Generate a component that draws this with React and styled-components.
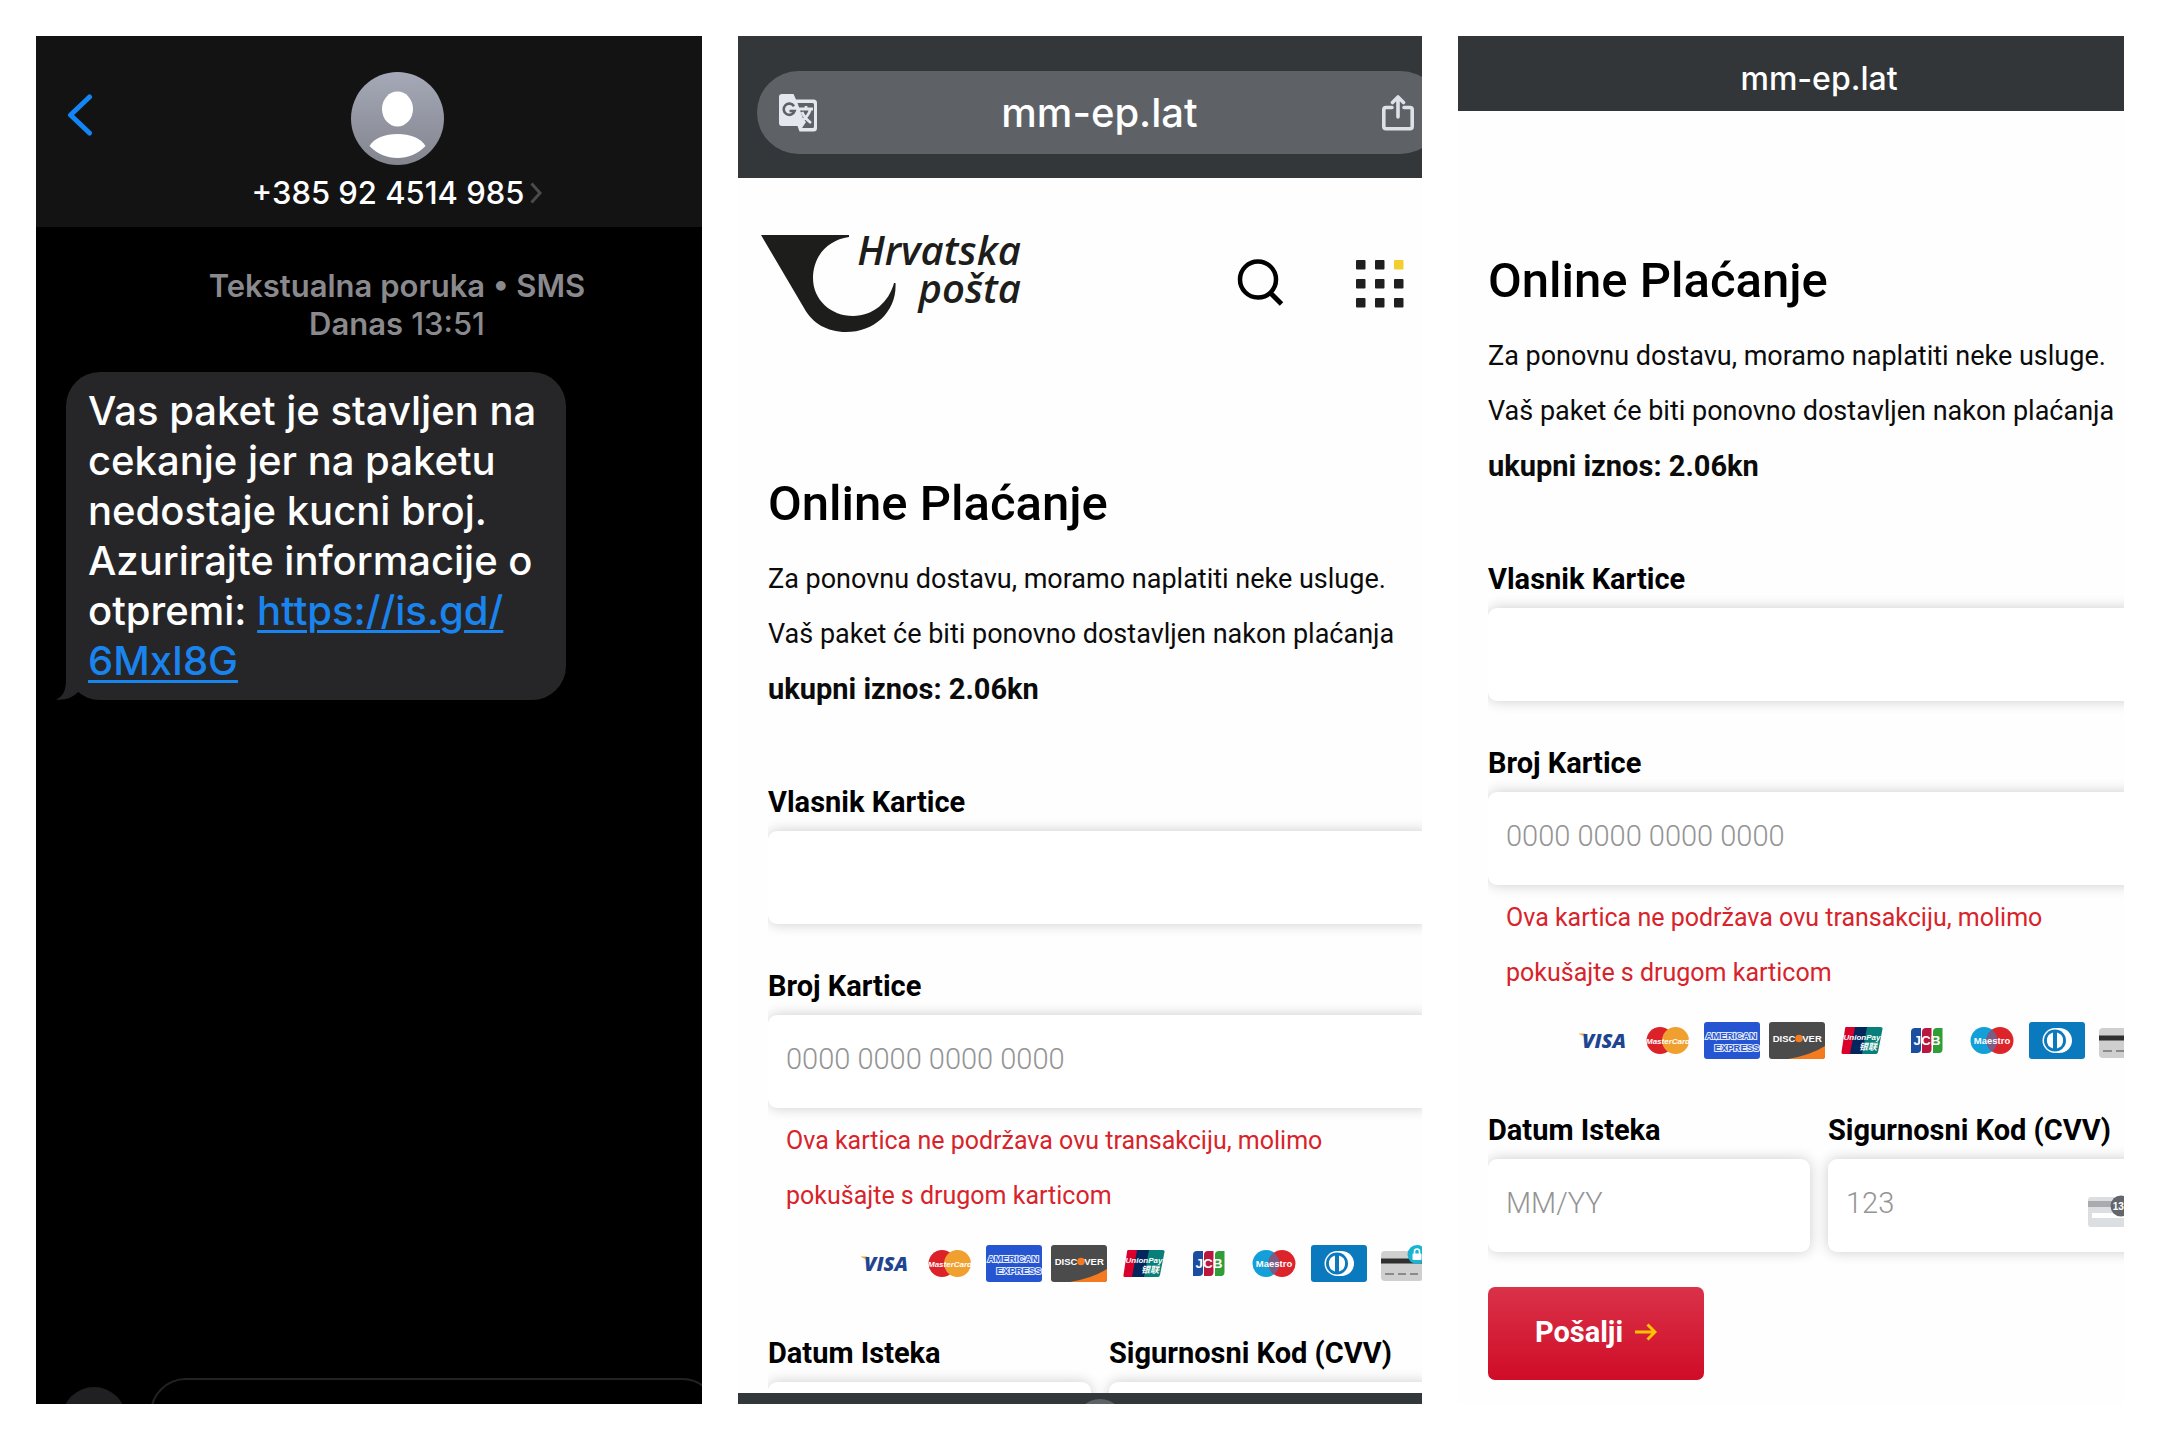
import React from 'react';
import styled, { createGlobalStyle } from 'styled-components';

const GlobalStyle = createGlobalStyle`
    * {
        box-sizing: border-box;
    }
    body {
        margin: 0;
        background: #fff;
    }
    h1, p {
        margin: 0;
    }
    button {
        border: 0;
        padding: 0;
        background: none;
        font-family: inherit;
        cursor: pointer;
    }
    svg {
        display: block;
    }
`

const Page = styled.main`
    display: grid;
    grid-template-columns: 37fr 38fr 37fr;
    gap: 36px;
    height: 100vh;
    padding: 36px;
`

const Panel = styled.section`
    display: flex;
    min-width: 0;
    min-height: 0;
    overflow: hidden;
    background: ${({ $dark }) => ($dark ? '#000' : '#fefefe')};
`

// the phone screen is wider than the panel that shows it
const Screen = styled.div`
    flex: none;
    display: flex;
    flex-direction: column;
    width: calc(100% + ${({ $crop }) => $crop}px);
    min-height: 0;
`

/* Messages */

const MessagesScreen = styled(Screen)`
    font-family: Inter, "Liberation Sans", sans-serif;
    color: #fff;
`

const ChatHeader = styled.header`
    display: grid;
    grid-template-columns: 88px 1fr 88px;
    height: 191px;
    background: #131313;
    .back {
        align-self: start;
        justify-self: center;
        margin-top: 58px;
    }
    .contact {
        display: flex;
        flex-direction: column;
        align-items: center;
        gap: 10px;
        padding-top: 36px;
    }
    .number {
        display: flex;
        align-items: center;
        gap: 6px;
        font-size: 31px;
        line-height: 36px;
        font-weight: 500;
        color: #fff;
    }
`

const Stamp = styled.p`
    padding: 40px 0 29px;
    text-align: center;
    font-size: 31px;
    line-height: 38px;
    font-weight: 500;
    color: #8a8a8e;
    strong {
        font-weight: 600;
    }
`

const Bubble = styled.div`
    position: relative;
    align-self: flex-start;
    margin-left: 30px;
    padding: 14px 30px 14px 22px;
    border-radius: 34px;
    background: #262628;
    font-size: 40px;
    line-height: 50px;
    font-weight: 500;
    a {
        color: #1a84ee;
        text-decoration-thickness: 3px;
        text-underline-offset: 5px;
    }
    .tail {
        position: absolute;
        left: -10px;
        bottom: 0;
    }
`

const Composer = styled.div`
    display: flex;
    gap: 24px;
    height: 26px;
    margin-top: auto;
    padding: 0 40px 0 26px;
    .plus {
        flex: none;
        width: 64px;
        height: 64px;
        margin-top: 9px;
        border-radius: 50%;
        background: #202022;
    }
    input {
        flex: 1;
        height: 72px;
        border: 2px solid #222224;
        border-radius: 36px;
        background: #000;
    }
`

/* Browser */

const BrowserBar = styled.div`
    display: flex;
    flex: none;
    padding: 35px 20px 24px 19px;
    background: #343739;
    font-family: Inter, "Liberation Sans", sans-serif;
`

const AddressPill = styled.div`
    display: flex;
    flex: 1;
    align-items: center;
    justify-content: space-between;
    height: 83px;
    padding: 0 28px 0 22px;
    border-radius: 42px;
    background: #5e6266;
    font-size: 40px;
    font-weight: 500;
    color: #fff;
`

const SlimBar = styled.div`
    flex: none;
    padding: 22px 0 11px;
    background: #333639;
    text-align: center;
    font-family: Inter, "Liberation Sans", sans-serif;
    font-size: 32px;
    line-height: 42px;
    font-weight: 500;
    color: #fff;
`

const BottomBar = styled.div`
    flex: none;
    height: 11px;
    overflow: hidden;
    background: #32373a;
    &::before {
        content: '';
        display: block;
        width: 48px;
        height: 48px;
        margin: 6px auto 0;
        border-radius: 50%;
        background: #5e6266;
    }
`

const WebPage = styled.div`
    flex: 1;
    min-height: 0;
    overflow: hidden;
    font-family: Roboto, "Noto Sans", sans-serif;
    color: #0b0b0b;
`

const SiteHeader = styled.header`
    display: flex;
    height: 156px;
    padding: 57px 58px 0 23px;
    .brand {
        display: flex;
        flex: 1;
    }
    .search {
        margin: 23px 71px 0 0;
        align-self: start;
    }
    .menu {
        margin-top: 25px;
        align-self: start;
    }
`

// the name starts over the open end of the horn
const BrandName = styled.span`
    width: 168px;
    margin: -4px 0 0 -44px;
    font-family: "Open Sans", "Noto Sans", sans-serif;
    font-size: 40px;
    line-height: 38px;
    font-style: italic;
    font-weight: 600;
    text-align: right;
    white-space: nowrap;
    color: #1d1d1b;
`

const Form = styled.form`
    margin: 0 30px;
    padding-top: 142px;
    overflow: hidden;
`

const Title = styled.h1`
    margin-bottom: 20px;
    font-size: 49px;
    line-height: 56px;
    font-weight: 500;
    color: #000;
`

const Intro = styled.p`
    margin-bottom: 57px;
    font-size: 27px;
    line-height: 55px;
    white-space: nowrap;
    strong {
        font-size: 29px;
    }
`

const Field = styled.div`
    position: relative;
    flex: 1;
    min-width: 0;
    margin-bottom: ${({ $gap }) => $gap}px;
    label {
        display: block;
        margin-bottom: 2px;
        font-size: 29px;
        line-height: 54px;
        font-weight: 700;
        color: #000;
        white-space: nowrap;
    }
    input {
        display: block;
        width: 100%;
        height: 93px;
        padding: 0 18px 5px;
        border: 0;
        border-radius: 9px;
        background: #fff;
        box-shadow: 0 0 14px rgba(0, 0, 0, 0.2);
        font-family: inherit;
        font-size: 29px;
        font-weight: 300;
    }
    input::placeholder {
        color: #949494;
        opacity: 1;
    }
    .hint {
        position: absolute;
        right: 10px;
        bottom: 24px;
    }
`

const ErrorText = styled.p`
    padding-left: 18px;
    font-size: 25px;
    line-height: 55px;
    color: #d8232a;
    white-space: nowrap;
`

const CardRow = styled.div`
    display: flex;
    justify-content: flex-end;
    gap: 9px;
    margin: 22px 0 44px;
`

const FieldRow = styled.div`
    display: flex;
    gap: 18px;
`

const SubmitButton = styled.button`
    display: flex;
    align-items: center;
    justify-content: center;
    gap: 12px;
    width: 216px;
    height: 93px;
    padding-bottom: 4px;
    border-radius: 7px;
    background: linear-gradient(#d93249, #d00c27);
    font-size: 29px;
    font-weight: 700;
    color: #fff;
`

function Avatar() {
    return (
        <svg width="93" height="93" viewBox="0 0 93 93">
            <defs>
                <linearGradient id="avatar" x1="0" y1="0" x2="0" y2="1">
                    <stop offset="0" stopColor="#a5a9b7" />
                    <stop offset="1" stopColor="#83858f" />
                </linearGradient>
            </defs>
            <circle cx="46.5" cy="46.5" r="46.5" fill="url(#avatar)" />
            <ellipse cx="46.5" cy="37" rx="15.5" ry="17.5" fill="#fff" />
            <path d="M18.500 74C23 66 34 62 46.500 62S70 66 74.500 74C67 82 57 86 46.500 86S26 82 18.500 74Z" fill="#fff" />
        </svg>
    )
}

function TranslateIcon() {
    return (
        <svg width="38" height="38" viewBox="0 0 38 38">
            <path d="M3 0H14.500L17 5.500H34.500Q38 5.500 38 9V34Q38 37.500 34.500 37.500H20.500L18.500 32H3Q0 32 0 29V3Q0 0 3 0Z" fill="#e4e7ee" />
            <path d="M18.500 9H33.500Q35 9 35 10.500V32.500Q35 34 33.500 34H23L27 28 24 24.500" fill="#5e6266" />
            <path d="M15 12.200A5.600 5.600 0 1 0 15.600 17H10.500" fill="none" stroke="#5e6266" strokeWidth="2.600" />
            <path d="M20 15H34M27 12V15M31.500 15C30 21 26 25 21.500 28M23 18C25 23 28 26 32 29" fill="none" stroke="#e4e7ee" strokeWidth="2.800" />
        </svg>
    )
}

function ShareIcon() {
    return (
        <svg width="32" height="36" viewBox="0 0 32 36" fill="none" stroke="#dde1e8" strokeWidth="3.600" strokeLinecap="round" strokeLinejoin="round">
            <path d="M10 12.500H4Q1.800 12.500 1.800 14.700V31.500Q1.800 33.800 4 33.800H28Q30.200 33.800 30.200 31.500V14.700Q30.200 12.500 28 12.500H22" />
            <path d="M16 22V2.500M10.500 7.500L16 2L21.500 7.500" />
        </svg>
    )
}

function PostHorn() {
    return (
        <svg width="136" height="98" viewBox="0 0 136 98">
            <path d="M0 0H88V2C66 5 52 22 52 43C52 65 70 81 92 81C112 81 128 67 133 48H134.500C136 76 114 97 85 97C66 97 51 88 43 73Z" fill="#1d1d1b" />
        </svg>
    )
}

function SearchIcon() {
    return (
        <svg width="48" height="48" viewBox="0 0 48 48" fill="none" stroke="#000" strokeWidth="4.500">
            <circle cx="21" cy="21.500" r="18" />
            <path d="M33 34.500L44.500 46" strokeWidth="5" />
        </svg>
    )
}

function MenuIcon() {
    const steps = [0, 19, 38]
    return (
        <svg width="48" height="48" viewBox="0 0 48 48">
            {steps.map(y => steps.map(x => (
                <rect key={x + '-' + y} x={x} y={y} width="9.500" height="9.500" rx="1" fill={x === 38 && y === 0 ? '#f5cd2f' : '#1f1f1f'} />
            )))}
        </svg>
    )
}

const small = { fontFamily: '"Liberation Sans", sans-serif', fontWeight: 700, fill: '#fff', textAnchor: 'middle' }

function Card({ label, children }) {
    return (
        <svg width="56" height="37" viewBox="0 0 56 37" role="img" aria-label={label}>
            {children}
        </svg>
    )
}

function CardLogos() {
    return (
        <CardRow>
            <Card label="Visa">
                <path d="M5 11.500H11L13 18Q10 13.500 5 12Z" fill="#e8a824" />
                <text x="30" y="26" {...small} fontFamily='"Open Sans", sans-serif' fontWeight="800" fontStyle="italic" fontSize="20" fill="#1f4590">VISA</text>
            </Card>
            <Card label="MasterCard">
                <circle cx="21" cy="18.500" r="13.500" fill="#dc2128" />
                <circle cx="36.500" cy="18.500" r="13.500" fill="#f0a02f" />
                <text x="29" y="21.500" {...small} fontStyle="italic" fontSize="8">MasterCard</text>
            </Card>
            <Card label="American Express">
                <rect width="56" height="37" rx="3" fill="#2555d0" />
                <text x="27" y="17" {...small} fontSize="9.500" fill="#2555d0" stroke="#dfe7fb" strokeWidth="2.200" paintOrder="stroke">AMERICAN</text>
                <text x="33" y="29" {...small} fontSize="9.500" fill="#2555d0" stroke="#dfe7fb" strokeWidth="2.200" paintOrder="stroke">EXPRESS</text>
            </Card>
            <Card label="Discover">
                <rect width="56" height="37" rx="3" fill="#4b4b4b" />
                <path d="M19 37Q42 33 56 24V34Q56 37 53 37Z" fill="#f47a20" />
                <text x="15" y="20" {...small} fontSize="9.500">DISC</text>
                <circle cx="30" cy="16.500" r="3.800" fill="#f47a20" />
                <text x="43" y="20" {...small} fontSize="9.500">VER</text>
            </Card>
            <Card label="UnionPay">
                <path d="M12 5H23L18 32H9Q7 32 7.500 30L11 7Q11 5 12 5Z" fill="#d9002b" />
                <path d="M21 5H35L30 32H16Z" fill="#03265c" />
                <path d="M33 5H46Q49 5 48.500 7L44 30Q43.500 32 42 32H28Z" fill="#087f79" />
                <text x="28" y="18" {...small} fontStyle="italic" fontSize="8">UnionPay</text>
                <text x="34" y="28" {...small} fontFamily='"Noto Sans CJK SC", sans-serif' fontStyle="italic" fontSize="9">银联</text>
            </Card>
            <Card label="JCB">
                <path d="M16 6H22V27Q22 31 18 31H12V10Q12 6 16 6Z" fill="#1b4e9f" />
                <path d="M27 6H32.500V27Q32.500 31 29 31H23V10Q23 6 27 6Z" fill="#b9173f" />
                <path d="M38 6H43.500V27Q43.500 31 40 31H34V10Q34 6 38 6Z" fill="#2f9d38" />
                <text x="28" y="23" {...small} fontSize="13.500">JCB</text>
            </Card>
            <Card label="Maestro">
                <circle cx="20" cy="18.500" r="13.500" fill="#139fd7" />
                <circle cx="36" cy="18.500" r="13.500" fill="#dd242b" />
                <path d="M28 7.700A13.500 13.500 0 0 1 28 29.300A13.500 13.500 0 0 1 28 7.700" fill="#7a5d86" />
                <text x="28" y="22" {...small} fontSize="9.500">Maestro</text>
            </Card>
            <Card label="Diners Club">
                <rect width="56" height="37" rx="3" fill="#0b79be" />
                <path d="M26 6H30C38 6 43 12 43 18.500S38 31 30 31H26Z" fill="#fff" />
                <circle cx="26" cy="18.500" r="12.500" fill="#fff" />
                <circle cx="26" cy="18.500" r="11" fill="#0b79be" />
                <path d="M24 10.500A8.300 8.300 0 0 0 24 26.500ZM28 10.500A8.300 8.300 0 0 1 28 26.500Z" fill="#fff" />
            </Card>
            <Card label="Card">
                <rect x="5" y="6" width="42" height="30" rx="4" fill="#cfcfcf" />
                <rect x="5" y="13.500" width="42" height="5" fill="#2f2f2f" />
                <path d="M9 29H18M22 29H30M34 29H42" stroke="#8a8a8a" strokeWidth="2.200" />
                <circle cx="41" cy="9.500" r="9.500" fill="#18b4d2" />
                <rect x="36.500" y="8.500" width="9" height="6.500" rx="1" fill="#fff" />
                <path d="M38.500 9V6.500A2.500 2.500 0 0 1 43.500 6.500V9" fill="none" stroke="#fff" strokeWidth="1.600" />
            </Card>
        </CardRow>
    )
}

function CvvIcon() {
    return (
        <svg className="hint" width="52" height="34" viewBox="0 0 52 34">
            <rect y="3" width="48" height="30" rx="3" fill="#dcdfe2" />
            <rect y="7" width="48" height="6" fill="#a9abaf" />
            <rect x="4" y="19" width="38" height="5" fill="#fff" />
            <circle cx="33" cy="12" r="10.500" fill="#63666b" />
            <text x="33" y="16" {...small} fontSize="10">135</text>
        </svg>
    )
}

function PaymentForm({ id }) {
    return (
        <Form>
            <Title>Online Plaćanje</Title>
            <Intro>
                Za ponovnu dostavu, moramo naplatiti neke usluge.<br />
                Vaš paket će biti ponovno dostavljen nakon plaćanja<br />
                <strong>ukupni iznos: 2.06kn</strong>
            </Intro>
            <Field $gap={35}>
                <label htmlFor={id + '-owner'}>Vlasnik Kartice</label>
                <input id={id + '-owner'} type="text" />
            </Field>
            <Field $gap={5}>
                <label htmlFor={id + '-number'}>Broj Kartice</label>
                <input id={id + '-number'} type="text" placeholder="0000 0000 0000 0000" />
            </Field>
            <ErrorText>
                Ova kartica ne podržava ovu transakciju, molimo<br />
                pokušajte s drugom karticom
            </ErrorText>
            <CardLogos />
            <FieldRow>
                <Field $gap={35}>
                    <label htmlFor={id + '-date'}>Datum Isteka</label>
                    <input id={id + '-date'} type="text" placeholder="MM/YY" />
                </Field>
                <Field $gap={35}>
                    <label htmlFor={id + '-cvv'}>Sigurnosni Kod (CVV)</label>
                    <input id={id + '-cvv'} type="text" placeholder="123" />
                    <CvvIcon />
                </Field>
            </FieldRow>
            <SubmitButton type="button">
                Pošalji
                <svg width="22" height="18" viewBox="0 0 22 18" fill="none" stroke="#fdc300" strokeWidth="3">
                    <path d="M0 9H20M12.500 1.500L20 9L12.500 16.500" />
                </svg>
            </SubmitButton>
        </Form>
    )
}

function Messages() {
    return (
        <MessagesScreen $crop={56}>
            <ChatHeader>
                <button className="back" aria-label="Natrag">
                    <svg width="26" height="42" viewBox="0 0 26 42" fill="none" stroke="#1485f5" strokeWidth="5" strokeLinecap="round" strokeLinejoin="round">
                        <path d="M22.500 3L3.500 21L22.500 39" />
                    </svg>
                </button>
                <div className="contact">
                    <Avatar />
                    <button className="number">
                        +385 92 4514 985
                        <svg width="12" height="22" viewBox="0 0 12 22" fill="none" stroke="#4b4b4e" strokeWidth="3">
                            <path d="M1.500 1.500L10 11L1.500 20.500" />
                        </svg>
                    </button>
                </div>
            </ChatHeader>
            <Stamp>
                <strong>Tekstualna poruka • SMS</strong><br />
                <strong>Danas</strong> 13:51
            </Stamp>
            <Bubble>
                Vas paket je stavljen na<br />
                cekanje jer na paketu<br />
                nedostaje kucni broj.<br />
                Azurirajte informacije o<br />
                otpremi: <a href="#link">https://is.gd/<br />6MxI8G</a>
                <svg className="tail" width="32" height="34" viewBox="0 0 32 34">
                    <path d="M10 0V14C10 24 7 31 0 33.500C8 34.500 16 32 21 27L30 20L18 0Z" fill="#262628" />
                </svg>
            </Bubble>
            <Composer>
                <button className="plus" aria-label="Dodaj" />
                <input type="text" aria-label="Tekstualna poruka" />
            </Composer>
        </MessagesScreen>
    )
}

export default function App() {
    return (
        <>
            <GlobalStyle />
            <Page>
                <Panel $dark>
                    <Messages />
                </Panel>
                <Panel>
                    <Screen $crop={40}>
                        <BrowserBar>
                            <AddressPill>
                                <button aria-label="Prevedi"><TranslateIcon /></button>
                                <span>mm-ep.lat</span>
                                <button aria-label="Podijeli"><ShareIcon /></button>
                            </AddressPill>
                        </BrowserBar>
                        <WebPage>
                            <SiteHeader>
                                <div className="brand">
                                    <PostHorn />
                                    <BrandName>Hrvatska<br />pošta</BrandName>
                                </div>
                                <button className="search" aria-label="Pretraži"><SearchIcon /></button>
                                <button className="menu" aria-label="Izbornik"><MenuIcon /></button>
                            </SiteHeader>
                            <PaymentForm id="top" />
                        </WebPage>
                        <BottomBar />
                    </Screen>
                </Panel>
                <Panel>
                    <Screen $crop={56}>
                        <SlimBar>mm-ep.lat</SlimBar>
                        <WebPage>
                            <PaymentForm id="scrolled" />
                        </WebPage>
                    </Screen>
                </Panel>
            </Page>
        </>
    )
}
